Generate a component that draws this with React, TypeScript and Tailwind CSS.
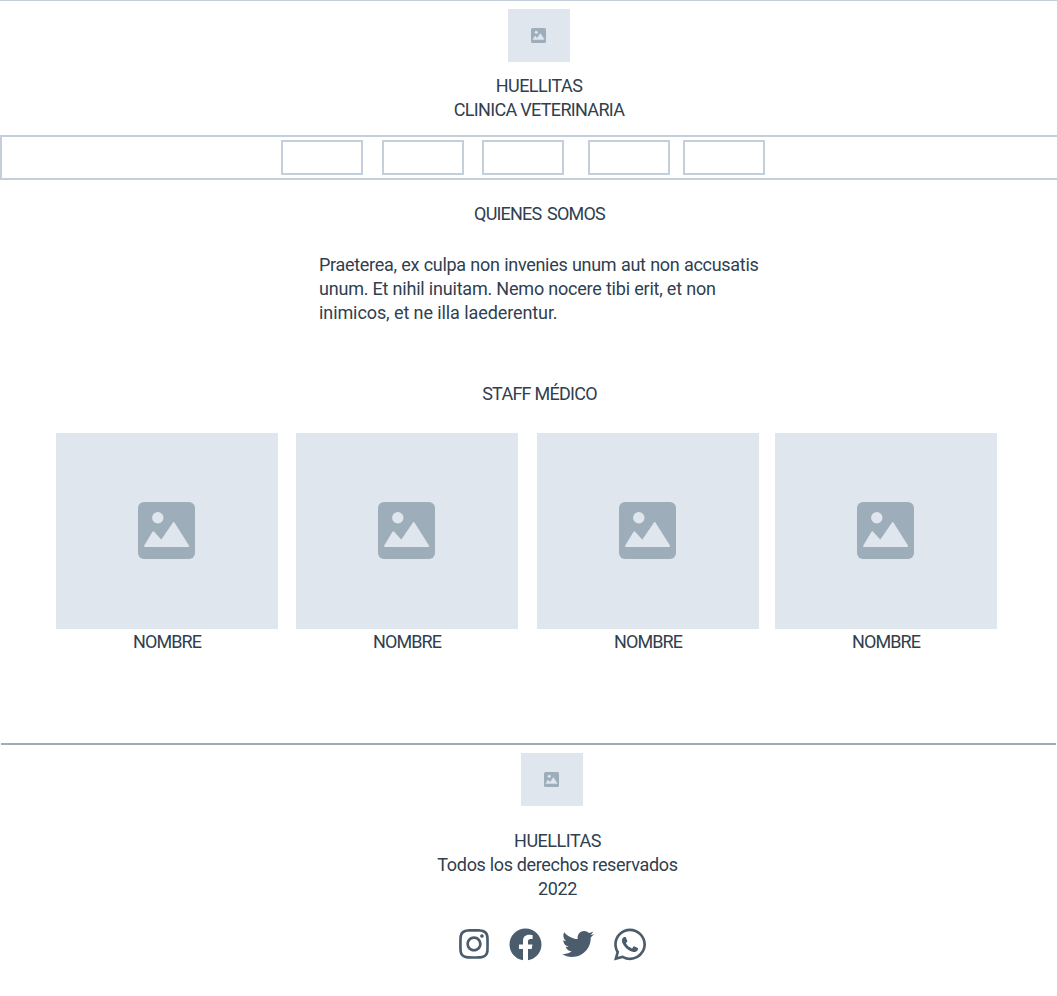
import { FaFacebook, FaInstagram, FaTwitter, FaWhatsapp } from "react-icons/fa";

function ImageIcon({ className }: { className: string }) {
  return (
    <svg viewBox="0 0 57 57" className={className} aria-hidden="true">
      <rect width="57" height="57" rx="6" fill="#9dadb9" />
      <circle cx="19.8" cy="15.8" r="5.7" fill="#dfe6ee" />
      <path
        d="M7 44L15.3 30.2L23.4 39L35.7 21L50.2 44Z"
        fill="#dfe6ee"
        stroke="#dfe6ee"
        strokeWidth="1.8"
        strokeLinejoin="round"
      />
    </svg>
  );
}

function Logo() {
  return (
    <div className="flex h-[53px] w-[62px] items-center justify-center bg-[#dfe6ee] pr-px">
      <ImageIcon className="size-[15px]" />
    </div>
  );
}

function StaffCard() {
  return (
    <article className="w-[222px]">
      <div className="flex h-[196px] items-center justify-center bg-[#dfe6ee] pr-px pb-px">
        <ImageIcon className="size-[57px]" />
      </div>
      <p className="mt-px text-center tracking-[-0.9px]">NOMBRE</p>
    </article>
  );
}

export default function App() {
  return (
    <div className="h-[996px] w-[1057px] overflow-hidden bg-white font-['Roboto',sans-serif] text-[18px] leading-6 whitespace-nowrap text-[#2f404f]">
      <header className="flex h-[135px] flex-col items-center border-t border-[#c3d0dc] pt-2 pl-[21px]">
        <Logo />
        <h1 className="mt-3 text-center">
          <span className="block tracking-[-0.5px]">HUELLITAS</span>
          <span className="block tracking-[-0.68px]">CLINICA VETERINARIA</span>
        </h1>
      </header>
      <nav className="flex h-[45px] border-y-2 border-l-2 border-[#c3d0dc] pt-[3px] pl-[279px]">
        <div className="h-[35px] w-[82px] border-2 border-[#c3d0dc]" />
        <div className="ml-[19px] h-[35px] w-[82px] border-2 border-[#c3d0dc]" />
        <div className="ml-[18px] h-[35px] w-[82px] border-2 border-[#c3d0dc]" />
        <div className="ml-6 h-[35px] w-[82px] border-2 border-[#c3d0dc]" />
        <div className="ml-[13px] h-[35px] w-[82px] border-2 border-[#c3d0dc]" />
      </nav>
      <main className="h-[563px] pt-[22px]">
        <h2 className="pl-[22px] text-center tracking-[-0.8px] [word-spacing:2px]">QUIENES SOMOS</h2>
        <p className="mt-[27px] pl-[319px]">
          <span className="block tracking-[-0.3px] [word-spacing:0.4px]">
            Praeterea, ex culpa non invenies unum aut non accusatis
          </span>
          <span className="block tracking-[-0.2px]">
            unum. Et nihil inuitam. Nemo nocere tibi erit, et non
          </span>
          <span className="block tracking-[-0.09px]">inimicos, et ne illa laederentur.</span>
        </p>
        <h2 className="mt-[57px] pl-[22px] text-center tracking-[-0.74px]">STAFF MÉDICO</h2>
        <section className="mt-[27px] grid grid-cols-[240px_241px_238px_222px] pl-14">
          <StaffCard />
          <StaffCard />
          <StaffCard />
          <StaffCard />
        </section>
      </main>
      <footer className="mx-px flex flex-col items-center border-t-2 border-[#9dadb9] pt-2 pl-[47px]">
        <div className="mb-[23px]">
          <Logo />
        </div>
        <div className="pl-[11px] text-center">
          <p className="tracking-[-0.5px]">HUELLITAS</p>
          <p className="tracking-[-0.33px]">Todos los derechos reservados</p>
          <p className="tracking-[-0.4px]">2022</p>
        </div>
        <div className="mt-6 flex h-[38px] items-center text-[#4b5d6c]">
          <FaInstagram className="h-[34px] w-[30px]" />
          <FaFacebook className="ml-[20.5px] size-[33px]" />
          <FaTwitter className="ml-[19.5px] size-8" />
          <FaWhatsapp className="ml-5 h-[37px] w-8" />
        </div>
      </footer>
    </div>
  );
}
